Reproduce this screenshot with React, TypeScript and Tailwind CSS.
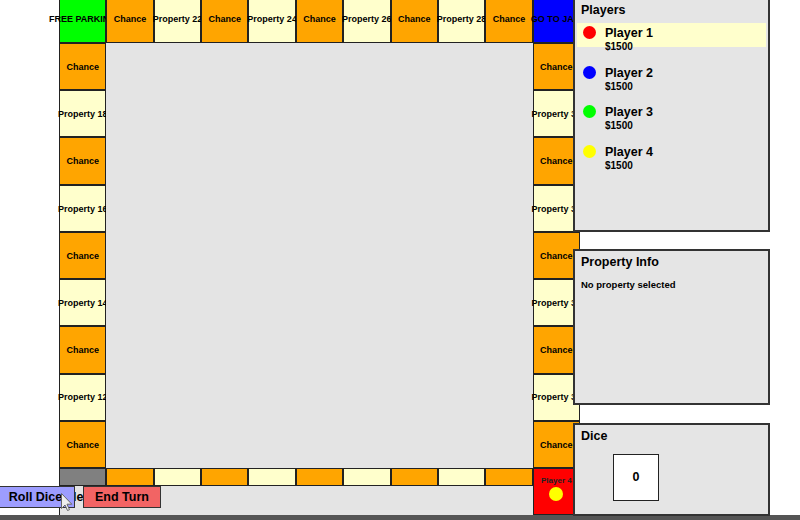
import React from 'react';
import clsx from 'clsx';

type Kind = 'chance' | 'prop' | 'free' | 'jail' | 'corner';

interface Space {
  label?: string;
  kind: Kind;
}

const bgFor: Record<Kind, string> = {
  chance: 'bg-[#ffa500]',
  prop: 'bg-[#ffffcc]',
  free: 'bg-[#00ff00]',
  jail: 'bg-[#0000ff]',
  corner: 'bg-[#808080]',
};

// board spaces, listed in the order they are drawn
const topRow: Space[] = [
  { label: 'FREE PARKING', kind: 'free' },
  { label: 'Chance', kind: 'chance' },
  { label: 'Property 22', kind: 'prop' },
  { label: 'Chance', kind: 'chance' },
  { label: 'Property 24', kind: 'prop' },
  { label: 'Chance', kind: 'chance' },
  { label: 'Property 26', kind: 'prop' },
  { label: 'Chance', kind: 'chance' },
  { label: 'Property 28', kind: 'prop' },
  { label: 'Chance', kind: 'chance' },
  { label: 'GO TO JAIL', kind: 'jail' },
];

const leftCol: Space[] = [18, 16, 14, 12].flatMap((n) => [
  { label: 'Chance', kind: 'chance' as Kind },
  { label: `Property ${n}`, kind: 'prop' as Kind },
]).concat([{ label: 'Chance', kind: 'chance' }]);

const rightCol: Space[] = [32, 34, 36, 38].flatMap((n) => [
  { label: 'Chance', kind: 'chance' as Kind },
  { label: `Property ${n}`, kind: 'prop' as Kind },
]).concat([{ label: 'Chance', kind: 'chance' }]);

const bottomRow: Space[] = [
  { kind: 'corner' },
  { kind: 'chance' },
  { kind: 'prop' },
  { kind: 'chance' },
  { kind: 'prop' },
  { kind: 'chance' },
  { kind: 'prop' },
  { kind: 'chance' },
  { kind: 'prop' },
  { kind: 'chance' },
];

const players = [
  { name: 'Player 1', money: 1500, color: 'bg-[#ff0000]' },
  { name: 'Player 2', money: 1500, color: 'bg-[#0000ff]' },
  { name: 'Player 3', money: 1500, color: 'bg-[#00ff00]' },
  { name: 'Player 4', money: 1500, color: 'bg-[#ffff00]' },
];

function Cell({ space, className }: { space: Space; className?: string }) {
  return (
    <div
      className={clsx(
        'flex items-center justify-center whitespace-nowrap border border-[#222] pt-[2px] text-[9px] font-bold text-black',
        bgFor[space.kind],
        className
      )}
    >
      {space.label}
    </div>
  );
}

function Panel({ className, children }: { className?: string; children: React.ReactNode }) {
  return (
    <div className={clsx('border-2 border-[#333] bg-[#e5e5e5] px-[6px]', className)}>
      {children}
    </div>
  );
}

export default function App() {
  const current = 0;

  return (
    <div className="relative w-[800px] h-[520px] overflow-hidden bg-white font-['Liberation_Sans',Arial,sans-serif] text-black">
      <div className="flex items-start h-[515px]">
        {/* Board */}
        <div className="ml-[59px] -mt-[5px] w-[521px] h-[520px] flex flex-col">
          <div className="flex h-[48px]">
            {topRow.map((s, i) => (
              <Cell key={i} space={s} className="flex-1 min-w-0" />
            ))}
          </div>

          <div className="flex h-[425px]">
            <div className="flex flex-col w-[47.36px]">
              {leftCol.map((s, i) => (
                <Cell key={i} space={s} className="flex-1 min-h-0" />
              ))}
            </div>
            <div className="flex-1 bg-[#e4e4e4]" />
            <div className="flex flex-col w-[47.36px]">
              {rightCol.map((s, i) => (
                <Cell key={i} space={s} className="flex-1 min-h-0" />
              ))}
            </div>
          </div>

          <div className="flex h-[47px]">
            <div className="flex-1 flex flex-col">
              <div className="flex h-[18px]">
                {bottomRow.map((s, i) => (
                  <Cell key={i} space={s} className="flex-1 min-w-0" />
                ))}
              </div>
              <div className="relative flex-1 bg-[#e4e4e4] border-l-[1.5px] border-[#222] pl-[6px] pt-[4px]">
                <div className="text-[12.5px] font-bold leading-[15px]">Messages</div>
                {/* game controls sit over the message area */}
                <div className="absolute left-[-64px] top-0 flex gap-[8px]">
                  <button className="h-[22px] w-[79px] flex items-center justify-center border-[1.5px] border-[#333] bg-[#9d9dff] text-[12.5px] font-bold">
                    Roll Dice
                  </button>
                  <button className="h-[22px] w-[78px] flex items-center justify-center border-[1.5px] border-[#333] bg-[#f26464] text-[12.5px] font-bold">
                    End Turn
                  </button>
                </div>
                <svg
                  className="absolute left-[1px] top-[7px]"
                  width="12"
                  height="19"
                  viewBox="0 0 12 19"
                >
                  <path
                    d="M0.5 0.5 L0.5 15.5 L4 12 L6.5 17.5 L8.5 16.7 L6 11.2 L10.8 11.2 Z"
                    fill="#eeeeee"
                    stroke="#666"
                    strokeWidth="1"
                  />
                </svg>
              </div>
            </div>
            <div className="w-[47.36px] h-[47px] border border-[#222] bg-[#ff0000] flex flex-col items-center pt-[7px]">
              <div className="text-[8px] font-bold leading-[10px] whitespace-nowrap text-[#222]">Player 4</div>
              <div className="mt-[1px] w-[14px] h-[14px] rounded-full bg-[#ffff00]" />
            </div>
          </div>
        </div>

        {/* Sidebar */}
        <div className="-ml-[7px] -mt-[3px] w-[197px] flex flex-col">
          <Panel className="h-[235px] pt-[4.2px]">
            <h2 className="text-[12.5px] font-bold leading-[15px] mb-[4.9px]">Players</h2>
            {players.map((p, i) => (
              <div key={p.name} className="h-[39.5px] -mx-[4px]">
                <div className={clsx('h-[24px] flex items-start pl-[5.5px] pt-[3px]', i === current && 'bg-[#ffffcc]')}>
                  <span className={clsx('w-[13px] h-[13px] rounded-full shrink-0', p.color)} />
                  <div className="ml-[9.5px]">
                    <div className="text-[12.5px] font-bold leading-[15px]">{p.name}</div>
                    <div className="text-[10px] font-bold leading-[12px]">${p.money}</div>
                  </div>
                </div>
              </div>
            ))}
          </Panel>

          <Panel className="mt-[17px] h-[156px] pt-[4.3px]">
            <h2 className="text-[12.5px] font-bold leading-[15px]">Property Info</h2>
            <p className="mt-[8.6px] text-[9.5px] font-bold leading-[12px]">No property selected</p>
          </Panel>

          <Panel className="mt-[18px] h-[93px] pt-[4px]">
            <h2 className="text-[12.5px] font-bold leading-[15px]">Dice</h2>
            <div className="mt-[10.3px] ml-[31.7px] w-[46.6px] h-[46.6px] bg-white border-[1.5px] border-[#222] flex items-center justify-center text-[12.5px] font-bold">
              0
            </div>
          </Panel>
        </div>
      </div>

      <div className="h-[5px] bg-[#555]" />
    </div>
  );
}
